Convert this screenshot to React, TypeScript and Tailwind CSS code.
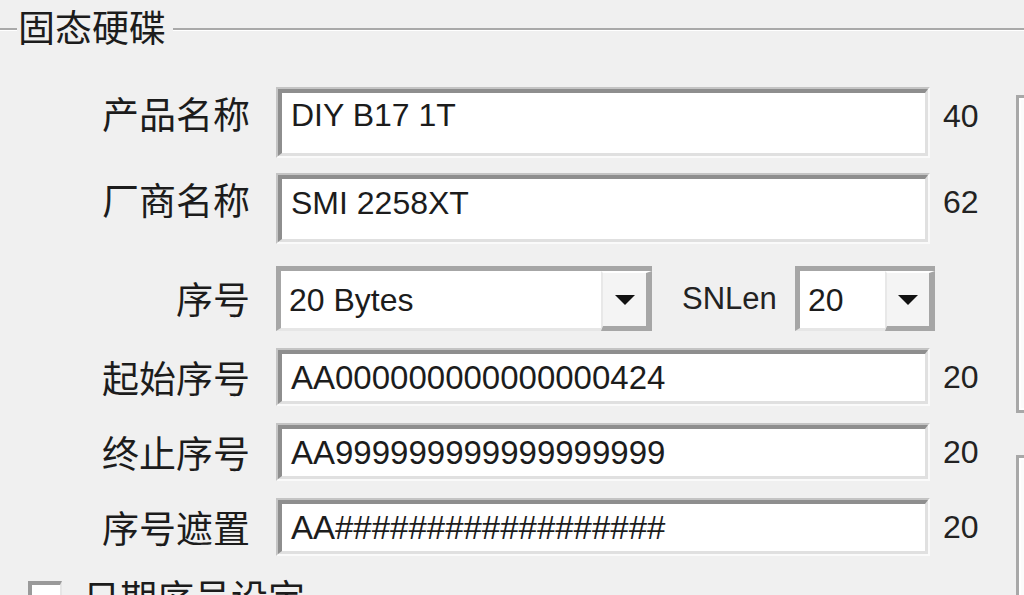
import React from "react";

const CJK = "font-['Noto_Sans_CJK_SC',sans-serif]";
const LAT = "font-['Liberation_Sans',Arial,sans-serif]";

function Sunken({ className, children }: { className: string; children?: React.ReactNode }) {
  return (
    <div
      className={`border-2 border-t-[#c4c4c4] border-l-[#c4c4c4] border-b-[#fafafa] border-r-[#fafafa] ${className}`}
    >
      <div className="h-full border-t-4 border-l-4 border-b-[3px] border-r-[3px] border-t-[#8e8e8e] border-l-[#8e8e8e] border-b-[#e0e0e0] border-r-[#e0e0e0] bg-white">
        {children}
      </div>
    </div>
  );
}

function Arrow() {
  return (
    <svg width="20" height="10" viewBox="0 0 20 10">
      <polygon points="0,0 20,0 10,10" fill="#111" />
    </svg>
  );
}

function Combo({ className, text, btnW }: { className: string; text: string; btnW: string }) {
  return (
    <div
      className={`flex border-t-[5px] border-l-[5px] border-b-[3px] border-t-[#a6a6a6] border-l-[#a6a6a6] border-b-[#e6e6e6] ${className}`}
    >
      <div className={`flex-1 bg-white flex items-center pl-[8px] text-[32px] leading-[32px] text-[#1c1c1c] ${LAT}`}>
        {text}
      </div>
      <div
        className={`${btnW} -mb-[3px] flex items-center justify-center bg-[#f4f4f4] border-t-2 border-l-2 border-t-white border-l-[#e8e8e8] border-r-[6px] border-b-[5px] border-r-[#a6a6a6] border-b-[#a6a6a6]`}
      >
        <Arrow />
      </div>
    </div>
  );
}

function MultiRow({ label, value, count, mt, pt }: { label: string; value: string; count: string; mt: string; pt: string }) {
  return (
    <div className={`flex items-start h-[71px] ${mt}`}>
      <div className={`w-[250px] shrink-0 text-right text-[37px] leading-[37px] mt-[8px] text-[#1c1c1c] ${CJK}`}>
        {label}
      </div>
      <Sunken className="ml-[26px] w-[654px] h-full shrink-0">
        <div className={`pl-[9px] ${pt} text-[32px] leading-[32px] text-[#1c1c1c] ${LAT}`}>{value}</div>
      </Sunken>
      <div className={`ml-[13px] mt-[13px] text-[32px] leading-[32px] text-[#222] ${LAT}`}>{count}</div>
    </div>
  );
}

function SingleRow({ label, value, count }: { label: string; value: string; count: string }) {
  return (
    <div className="flex items-center h-[58px] mt-[17px]">
      <div className={`w-[250px] shrink-0 text-right text-[37px] leading-[37px] text-[#1c1c1c] ${CJK}`}>{label}</div>
      <Sunken className="ml-[26px] w-[654px] h-full shrink-0">
        <div className={`h-full flex items-center pl-[9px] text-[33px] leading-[33px] text-[#1c1c1c] ${LAT}`}>
          {value}
        </div>
      </Sunken>
      <div className={`ml-[13px] text-[32px] leading-[32px] text-[#222] ${LAT}`}>{count}</div>
    </div>
  );
}

export default function App() {
  return (
    <div className="w-[1024px] h-[595px] overflow-hidden bg-[#f0f0f0] flex flex-col">
      {/* group title */}
      <div className="h-[58px] shrink-0 flex items-start">
        <div className="w-[17px] mt-[28px] h-[3px] bg-[#a9a9a9] border-b border-b-white" />
        <div className={`mt-[8px] ml-[1px] text-[37px] leading-[37px] text-[#1c1c1c] ${CJK}`}>固态硬碟</div>
        <div className="flex-1 ml-[7px] mt-[28px] h-[3px] bg-[#a9a9a9] border-b border-b-white" />
      </div>

      <div className="flex flex-1">
        {/* form */}
        <div className="w-[1016px] shrink-0 flex flex-col">
          <MultiRow label="产品名称" value="DIY B17 1T" count="40" mt="mt-[29px]" pt="pt-[6px]" />
          <MultiRow label="厂商名称" value="SMI 2258XT" count="62" mt="mt-[15px]" pt="pt-[8px]" />

          <div className="flex items-center h-[65px] mt-[22px]">
            <div className={`w-[250px] shrink-0 text-right text-[37px] leading-[37px] text-[#1c1c1c] ${CJK}`}>序号</div>
            <Combo className="ml-[26px] w-[376px] h-full shrink-0" text="20 Bytes" btnW="w-[51px]" />
            <div className={`ml-[30px] w-[113px] shrink-0 text-[31px] leading-[32px] text-[#222] ${LAT}`}>SNLen</div>
            <Combo className="w-[140px] h-full shrink-0" text="20" btnW="w-[50px]" />
          </div>

          <SingleRow label="起始序号" value="AA000000000000000424" count="20" />
          <SingleRow label="终止序号" value="AA999999999999999999" count="20" />
          <SingleRow label="序号遮置" value="AA##################" count="20" />

          <div className="flex items-start mt-[22px]">
            <div className="ml-[28px] mt-[3px] w-[34px] h-[34px] border-t-[4px] border-l-[4px] border-t-[#9a9a9a] border-l-[#9a9a9a] border-b-2 border-r-2 border-b-[#e6e6e6] border-r-[#e6e6e6] bg-white" />
            <div className={`ml-[21px] text-[37px] leading-[37px] text-[#1c1c1c] ${CJK}`}>日期序号设定</div>
          </div>
        </div>

        {/* right column boxes */}
        <div className="flex-1 flex flex-col">
          <div className="mt-[37px] h-[318px] border-l-[3px] border-t-[3px] border-b-[3px] border-[#a8a8a8]">
            <div className="h-full border-l-2 border-t-2 border-b-2 border-white bg-[#fbfbfb]" />
          </div>
          <div className="mt-[42px] h-[200px] border-l-[3px] border-t-[3px] border-[#a8a8a8]">
            <div className="h-full border-l-2 border-t-2 border-white bg-[#fbfbfb]" />
          </div>
        </div>
      </div>
    </div>
  );
}
